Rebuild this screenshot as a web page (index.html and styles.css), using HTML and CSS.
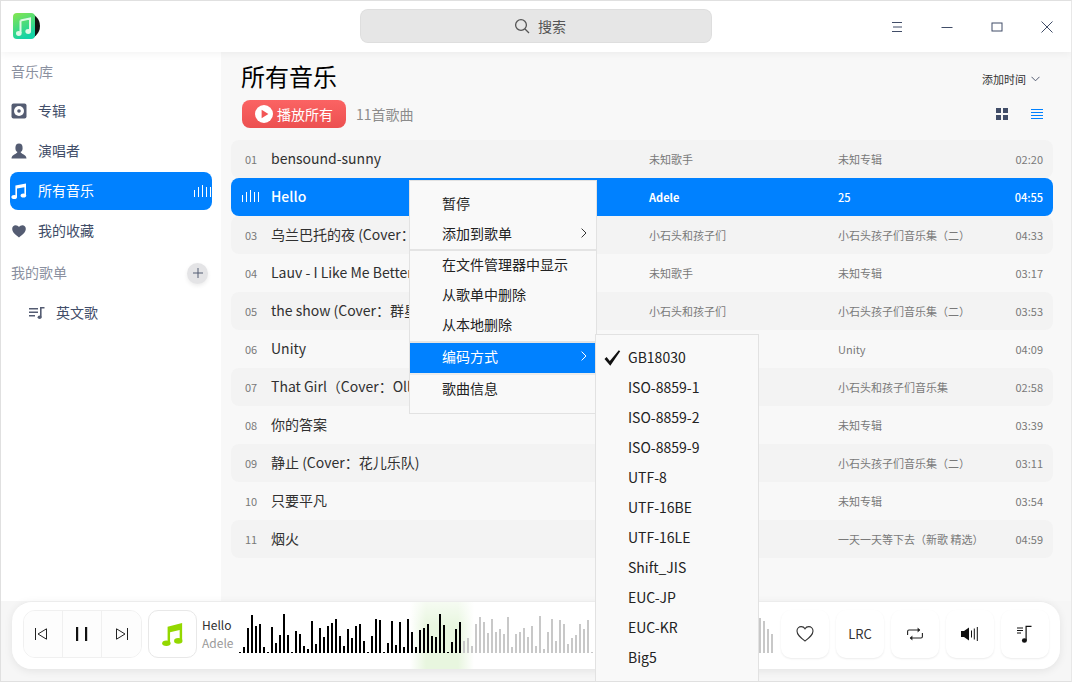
FILE: index.html
```html
<!DOCTYPE html>
<html lang="zh-CN">
<head>
    <meta charset="UTF-8">
    <meta name="viewport" content="width=device-width, initial-scale=1.0">
    <title>音乐</title>
    <link rel="stylesheet" href="styles.css">
</head>
<body>
    <div class="window">
        <header class="topbar">
            <svg class="logo" width="30" height="28" viewBox="0 0 30 28">
                <defs>
                    <linearGradient id="logoFill" x1="0" y1="0" x2="0.4" y2="1">
                        <stop offset="0" stop-color="#86e64e"/>
                        <stop offset="1" stop-color="#14d3a6"/>
                    </linearGradient>
                </defs>
                <circle cx="15" cy="14" r="13" fill="#111"/>
                <rect x="1" y="1" width="22" height="26" rx="4" fill="url(#logoFill)"/>
                <path d="M8.5 8.5 L18 6.5 V19" fill="none" stroke="#dff9e6" stroke-width="2"/>
                <path d="M8.5 8.5 V21" fill="none" stroke="#dff9e6" stroke-width="2"/>
                <ellipse cx="6.8" cy="21.5" rx="2.8" ry="2.4" fill="#dff9e6"/>
                <ellipse cx="16.2" cy="19.5" rx="2.8" ry="2.4" fill="#dff9e6"/>
            </svg>
            <div class="search">
                <svg width="16" height="16" viewBox="0 0 16 16" fill="none" stroke="#555" stroke-width="1.3">
                    <circle cx="7" cy="7" r="5.4"/>
                    <path d="M11 11 L15 15"/>
                </svg>
                <span>搜索</span>
            </div>
            <div class="winctl">
                <svg width="12" height="12" viewBox="0 0 12 12" stroke="#414d68"><path d="M1 1.5 H11 M2 6 H11 M1 10.5 H11"/></svg>
                <svg width="12" height="12" viewBox="0 0 12 12" stroke="#414d68"><path d="M0.5 6.5 H11.5"/></svg>
                <svg width="12" height="12" viewBox="0 0 12 12" fill="none" stroke="#414d68"><rect x="1" y="2" width="10" height="8"/></svg>
                <svg width="12" height="12" viewBox="0 0 12 12" stroke="#414d68"><path d="M0.5 0.5 L11.5 11.5 M11.5 0.5 L0.5 11.5"/></svg>
            </div>
        </header>

        <div class="content">
            <aside class="sidebar">
                <div class="side-label">音乐库</div>
                <nav class="nav">
                    <a class="nav-item">
                        <svg width="16" height="16" viewBox="0 0 16 16"><rect x="0.5" y="0.5" width="15" height="15" rx="2" fill="#545c72"/><circle cx="8" cy="8" r="5" fill="#fff"/><circle cx="8" cy="8" r="1.8" fill="#545c72"/></svg>
                        <span>专辑</span>
                    </a>
                    <a class="nav-item">
                        <svg width="16" height="16" viewBox="0 0 16 16" fill="#545c72"><ellipse cx="8" cy="5" rx="3.6" ry="4.4"/><path d="M6.4 9 L9.6 9 C10 11 15.5 11.5 15.5 15.5 H0.5 C0.5 11.5 6 11 6.4 9 Z"/></svg>
                        <span>演唱者</span>
                    </a>
                    <a class="nav-item active">
                        <svg width="16" height="16" viewBox="0 0 16 16" fill="#fff"><path d="M4.4 2.6 L15 0.6 V12.4 H13.4 V4.2 L6 5.6 V14 H4.4 Z"/><ellipse cx="3.2" cy="14" rx="2.8" ry="2"/><ellipse cx="12.4" cy="12.6" rx="2.8" ry="2"/></svg>
                        <span>所有音乐</span>
                        <i class="eq"><b class="e1"></b><b class="e2"></b><b class="e3"></b><b class="e2"></b><b class="e2"></b></i>
                    </a>
                    <a class="nav-item">
                        <svg width="16" height="16" viewBox="0 0 16 16" fill="#545c72"><path d="M8 14.5 C4 11.5 1.2 9.2 1.2 5.8 C1.2 3.6 2.8 2.2 4.6 2.2 C6 2.2 7.2 2.9 8 4.1 C8.8 2.9 10 2.2 11.4 2.2 C13.2 2.2 14.8 3.6 14.8 5.8 C14.8 9.2 12 11.5 8 14.5 Z"/></svg>
                        <span>我的收藏</span>
                    </a>
                </nav>
                <div class="side-label playlists">
                    <span>我的歌单</span>
                    <button class="add-btn">
                        <svg width="10" height="10" viewBox="0 0 10 10" stroke="#535c72"><path d="M5 0 V10 M0 5 H10"/></svg>
                    </button>
                </div>
                <a class="nav-item sub">
                    <svg width="16" height="14" viewBox="0 0 16 14" fill="#545c72"><path d="M0 2 H9 V3.4 H0 Z M0 5.5 H9 V6.9 H0 Z M0 9 H6 V10.4 H0 Z"/><path d="M11 11 V1 H15.5 V2.6 H12.6 V11 Z"/><ellipse cx="10.6" cy="11.2" rx="2" ry="1.8"/></svg>
                    <span>英文歌</span>
                </a>
            </aside>

            <main class="main">
                <div class="head-row">
                    <h1>所有音乐</h1>
                    <div class="sort">添加时间
                        <svg width="9" height="6" viewBox="0 0 9 6" fill="none" stroke="#545c72"><path d="M0.5 0.8 L4.5 4.8 L8.5 0.8"/></svg>
                    </div>
                </div>
                <div class="tool-row">
                    <button class="play-all">
                        <svg width="18" height="18" viewBox="0 0 18 18"><circle cx="9" cy="9" r="9" fill="#fff"/><path d="M6.6 4.8 L13.4 9 L6.6 13.2 Z" fill="#f25555"/></svg>
                        <span>播放所有</span>
                    </button>
                    <span class="count">11首歌曲</span>
                    <div class="views">
                        <svg width="12" height="12" viewBox="0 0 12 12" fill="#414d68"><rect width="5" height="5"/><rect x="7" width="5" height="5"/><rect y="7" width="5" height="5"/><rect x="7" y="7" width="5" height="5"/></svg>
                        <svg width="12" height="12" viewBox="0 0 12 12" stroke="#0081ff"><path d="M0 1.5 H12 M0 4.5 H12 M0 7.5 H12 M0 10.5 H12"/></svg>
                    </div>
                </div>

                <div class="songs">
                    <div class="song"><span class="no">01</span><span class="name">bensound-sunny</span><span class="artist">未知歌手</span><span class="album">未知专辑</span><span class="time">02:20</span></div>
                    <div class="song playing"><span class="no"><i class="eq"><b class="e1"></b><b class="e2"></b><b class="e3"></b><b class="e2"></b><b class="e2"></b></i></span><span class="name">Hello</span><span class="artist">Adele</span><span class="album">25</span><span class="time">04:55</span></div>
                    <div class="song"><span class="no">03</span><span class="name">乌兰巴托的夜 (Cover：</span><span class="artist">小石头和孩子们</span><span class="album">小石头孩子们音乐集（二）</span><span class="time">04:33</span></div>
                    <div class="song"><span class="no">04</span><span class="name">Lauv - I Like Me Better</span><span class="artist">未知歌手</span><span class="album">未知专辑</span><span class="time">03:17</span></div>
                    <div class="song"><span class="no">05</span><span class="name">the show (Cover：群星)</span><span class="artist">小石头和孩子们</span><span class="album">小石头孩子们音乐集（二）</span><span class="time">03:53</span></div>
                    <div class="song"><span class="no">06</span><span class="name">Unity</span><span class="artist"></span><span class="album">Unity</span><span class="time">04:09</span></div>
                    <div class="song"><span class="no">07</span><span class="name">That Girl（Cover：Olly）</span><span class="artist"></span><span class="album">小石头和孩子们音乐集</span><span class="time">02:58</span></div>
                    <div class="song"><span class="no">08</span><span class="name">你的答案</span><span class="artist"></span><span class="album">未知专辑</span><span class="time">03:39</span></div>
                    <div class="song"><span class="no">09</span><span class="name">静止 (Cover：花儿乐队)</span><span class="artist"></span><span class="album">小石头孩子们音乐集（二）</span><span class="time">03:11</span></div>
                    <div class="song"><span class="no">10</span><span class="name">只要平凡</span><span class="artist"></span><span class="album">未知专辑</span><span class="time">03:54</span></div>
                    <div class="song"><span class="no">11</span><span class="name">烟火</span><span class="artist"></span><span class="album">一天一天等下去（新歌 精选）</span><span class="time">04:59</span></div>
                </div>
            </main>
        </div>

        <footer class="footer">
            <div class="player">
                <div class="transport">
                    <button class="prev">
                        <svg width="14" height="12" viewBox="0 0 14 12" fill="none" stroke="#222"><path d="M1.5 0 V12 M12.5 0.8 L4 6 L12.5 11.2 Z"/></svg>
                    </button>
                    <button>
                        <svg width="14" height="14" viewBox="0 0 14 14" fill="#111"><rect x="1" width="2.2" height="14"/><rect x="10" width="2.2" height="14"/></svg>
                    </button>
                    <button>
                        <svg width="14" height="12" viewBox="0 0 14 12" fill="none" stroke="#222"><path d="M12.5 0 V12 M1.5 0.8 L10 6 L1.5 11.2 Z"/></svg>
                    </button>
                </div>
                <button class="cover">
                    <svg width="21" height="25" viewBox="0 0 24 27" preserveAspectRatio="none" fill="#93d800"><path d="M6.4 5 L23 1 V20 H20.2 V8.6 L9.2 11.2 V23 H6.4 Z"/><ellipse cx="5" cy="23" rx="4.8" ry="3"/><ellipse cx="18.6" cy="20.4" rx="4.8" ry="3"/></svg>
                </button>
                <div class="now">
                    <div class="now-title">Hello</div>
                    <div class="now-artist">Adele</div>
                </div>
                <div class="wave" id="wave"></div>
                <div class="actions">
                    <button>
                        <svg width="18" height="18" viewBox="0 0 18 18" fill="none" stroke="#333" stroke-width="1.1"><path d="M9 16 C4.5 12.6 1 10 1 6 C1 3.4 3 1.6 5.2 1.6 C6.8 1.6 8.2 2.4 9 3.8 C9.8 2.4 11.2 1.6 12.8 1.6 C15 1.6 17 3.4 17 6 C17 10 13.500 12.600 9 16 Z"/></svg>
                    </button>
                    <button class="lrc">LRC</button>
                    <button>
                        <svg width="16" height="14" viewBox="0 0 16 14" fill="none" stroke="#222" stroke-width="1.1"><path d="M0.6 8 V4.4 Q0.6 3 2 3 H13"/><path d="M15.400 6 V9.600 Q15.400 11 14 11 H3"/><path d="M10.600 0.400 L13.200 3 L10.600 5.600" fill="#222" stroke="none"/><path d="M5.400 8.400 L2.800 11 L5.400 13.600" fill="#222" stroke="none"/></svg>
                    </button>
                    <button>
                        <svg width="18" height="14" viewBox="0 0 18 14" fill="#111"><path d="M0 4 H3 L8 0.6 V13.400 L3 10 H0 Z"/><rect x="10" y="3.500" width="1" height="7"/><rect x="12.800" y="1.500" width="1" height="11"/><rect x="15.800" width="1" height="14"/></svg>
                    </button>
                    <button>
                        <svg width="17" height="18" viewBox="0 0 17 18" fill="#111"><path d="M0 2.500 H6 V3.500 H0 Z M0 5 H6 V6 H0 Z M0 7.500 H4 V8.500 H0 Z"/><path d="M8.500 15 V0.700 H14.500 V1.900 H9.700 V15 Z"/><ellipse cx="7.400" cy="15.500" rx="2.500" ry="2.200"/></svg>
                    </button>
                </div>
            </div>
        </footer>

        <div class="menu">
            <div class="menu-item top">暂停</div>
            <div class="menu-item top">添加到歌单<svg class="arrow" width="6" height="10" viewBox="0 0 6 10" fill="none" stroke="#333"><path d="M0.6 0.6 L5 5 L0.6 9.400"/></svg></div>
            <div class="menu-sep first"></div>
            <div class="menu-item">在文件管理器中显示</div>
            <div class="menu-item">从歌单中删除</div>
            <div class="menu-item">从本地删除</div>
            <div class="menu-sep"></div>
            <div class="menu-item current">编码方式<svg class="arrow" width="6" height="10" viewBox="0 0 6 10" fill="none" stroke="#fff"><path d="M0.6 0.6 L5 5 L0.6 9.400"/></svg></div>
            <div class="menu-sep light"></div>
            <div class="menu-item">歌曲信息</div>
        </div>

        <div class="submenu">
            <div class="sub-item checked">
                <svg width="17" height="16" viewBox="0 0 17 16" fill="#111"><path d="M0.500 9 L2.600 7 L5.800 11 L14.800 0.200 L16.200 1.200 L6.300 15.800 Z"/></svg>
                GB18030
            </div>
            <div class="sub-item">ISO-8859-1</div>
            <div class="sub-item">ISO-8859-2</div>
            <div class="sub-item">ISO-8859-9</div>
            <div class="sub-item">UTF-8</div>
            <div class="sub-item">UTF-16BE</div>
            <div class="sub-item">UTF-16LE</div>
            <div class="sub-item">Shift_JIS</div>
            <div class="sub-item">EUC-JP</div>
            <div class="sub-item">EUC-KR</div>
            <div class="sub-item">Big5</div>
        </div>
    </div>
    <script src="wave.js"></script>
</body>
</html>
```

FILE: styles.css
```css
* {
    box-sizing: border-box;
}
html, body {
    margin: 0;
    height: 100%;
    overflow: hidden;
}
body {
    font-family: "Noto Sans CJK SC", "Noto Sans", sans-serif;
    font-size: 14px;
    color: #303030;
}
button {
    font-family: inherit;
    border: none;
    padding: 0;
    cursor: pointer;
}
.window {
    position: relative;
    width: 1072px;
    height: 682px;
    border: 1px solid #e0e0e0;
    border-right-color: #e8e8e8;
    display: flex;
    flex-direction: column;
    overflow: hidden;
    background: #f8f8f8;
}

/* title bar */
.topbar {
    position: relative;
    z-index: 2;
    height: 51px;
    flex: none;
    background: #fff;
    box-shadow: 0 2px 8px rgba(0, 0, 0, 0.05);
    display: flex;
    align-items: center;
    padding: 0 0 1px 11px;
}
.logo {
    flex: none;
}
.search {
    width: 352px;
    height: 34px;
    margin-left: 318px;
    padding-left: 8px;
    background: #e6e6e6;
    border-radius: 8px;
    box-shadow: inset 0 0 0 1px rgba(0, 0, 0, 0.03);
    display: flex;
    align-items: center;
    justify-content: center;
    gap: 8px;
    color: #555;
}
.winctl {
    margin: 2px 0 0 179px;
    display: flex;
    gap: 38px;
}

.content {
    flex: 1;
    display: flex;
    min-height: 0;
}

/* sidebar */
.sidebar {
    width: 220px;
    flex: none;
    background: #fff;
    padding: 0 9px;
}
.side-label {
    height: 40px;
    line-height: 38px;
    padding-left: 1px;
    color: #8a90a0;
}
.side-label.playlists {
    height: 42px;
    line-height: 40px;
    margin-top: 2px;
    display: flex;
    justify-content: space-between;
    align-items: center;
    padding-right: 4px;
}
.playlists span {
    margin-bottom: 2px;
}
.add-btn {
    width: 21px;
    height: 21px;
    border-radius: 50%;
    background: #e4e4e6;
    box-shadow: 0 2px 4px rgba(0, 0, 0, 0.08);
    display: flex;
    align-items: center;
    justify-content: center;
}
.nav {
    display: flex;
    flex-direction: column;
    gap: 2px;
}
.nav-item {
    height: 38px;
    border-radius: 8px;
    display: flex;
    align-items: center;
    gap: 11px;
    padding-left: 1px;
    color: #414d68;
}
.nav-item span {
    margin-bottom: 2px;
}
.nav-item.active {
    background: #0081ff;
    color: #fff;
}
.nav-item.sub {
    padding-left: 19px;
    gap: 11px;
}
.eq {
    display: inline-flex;
    align-items: flex-end;
    gap: 3px;
    height: 12px;
}
.eq b {
    width: 1px;
    background: #fff;
}
.eq .e1 {
    height: 7px;
}
.eq .e2 {
    height: 10px;
}
.eq .e3 {
    height: 12px;
}
.nav-item .eq {
    margin-left: auto;
    margin-right: 1px;
}

/* main list */
.main {
    flex: 1;
    min-width: 0;
    padding: 0 18px 0 10px;
}
.head-row {
    height: 48px;
    display: flex;
    justify-content: space-between;
    align-items: center;
    padding-left: 10px;
}
h1 {
    margin: 0 0 2px;
    font-size: 24px;
    font-weight: 400;
    color: #000;
}
.sort {
    font-size: 11px;
    color: #333;
    display: flex;
    align-items: center;
    gap: 5px;
    margin-top: 6px;
    padding-right: 13px;
}
.tool-row {
    height: 28px;
    display: flex;
    align-items: center;
    padding-left: 11px;
}
.play-all {
    width: 104px;
    height: 28px;
    border-radius: 8px;
    background: linear-gradient(#fb6363, #ec5050);
    color: #fff;
    font-size: 14px;
    display: flex;
    align-items: center;
    gap: 4px;
    padding-left: 13px;
}
.count {
    margin-left: 10px;
    color: #8c8c8c;
}
.views {
    margin-left: auto;
    display: flex;
    gap: 23px;
    padding-right: 10px;
}
.songs {
    margin-top: 12px;
}
.song {
    height: 38px;
    border-radius: 8px;
    display: flex;
    align-items: center;
    padding: 0 10px 0 14px;
}
.song:nth-child(odd) {
    background: #f3f3f3;
}
.song .no {
    width: 26px;
    flex: none;
    font-size: 11px;
    color: #797979;
}
.song .name {
    width: 378px;
    flex: none;
    padding-bottom: 2px;
    white-space: nowrap;
}
.song .artist {
    width: 189px;
    flex: none;
    font-size: 11px;
    color: #797979;
}
.song .album {
    flex: 1;
    font-size: 11px;
    color: #797979;
}
.song .time {
    font-size: 11px;
    color: #797979;
}
.song.playing {
    background: #0081ff;
}
.song.playing span {
    color: #fff;
}
.song.playing .name {
    font-weight: 500;
}
.song.playing .artist {
    font-weight: 700;
}
.song.playing .album, .song.playing .time {
    font-weight: 500;
}
.song.playing .no {
    margin-left: -3px;
    margin-right: 3px;
}

/* player */
.footer {
    flex: none;
    height: 80px;
    padding: 0 11px 12px;
    background: #f6f6f6;
}
.player {
    height: 68px;
    border-radius: 20px;
    background:
        linear-gradient(180deg, rgba(255, 255, 255, 0.6), rgba(255, 255, 255, 0) 35%),
        linear-gradient(90deg, #fff 398px, #e8f6df 414px, #e8f6df 446px, #fff 462px);
    box-shadow: 0 2px 8px rgba(0, 0, 0, 0.08);
    border-top: 1px solid #ececec;
    display: flex;
    align-items: center;
    padding: 0 11px 3px;
}
.player button {
    background: #fff;
    display: flex;
    align-items: center;
    justify-content: center;
}
.transport {
    display: flex;
    height: 48px;
    border: 1px solid #f0f0f0;
    border-radius: 12px;
    overflow: hidden;
    flex: none;
}
.transport button {
    width: 39px;
    border-right: 1px solid #f0f0f0;
    background: #fdfdfd;
}
.transport button:last-child {
    border-right: none;
}
.transport .prev {
    padding-right: 4px;
}
.player .cover {
    width: 49px;
    height: 48px;
    flex: none;
    margin-left: 6px;
    border: 1px solid #e8e8e8;
    border-radius: 10px;
}
.now {
    width: 37px;
    flex: none;
    margin-left: 5px;
    font-size: 12px;
    line-height: 18px;
    white-space: nowrap;
}
.now-title {
    color: #303030;
}
.now-artist {
    color: #9a9a9a;
}
.wave {
    flex: 1;
    min-width: 0;
    height: 48px;
    padding-bottom: 5px;
    display: flex;
    align-items: flex-end;
    gap: 2px;
    overflow: hidden;
}
.wave span {
    width: 2px;
    flex: none;
    background: #c8c8c8;
}
.wave span.played {
    background: #000;
}
.actions {
    display: flex;
    gap: 7px;
    flex: none;
    margin-left: 6px;
}
.actions button {
    width: 48px;
    height: 48px;
    border-radius: 10px;
    box-shadow: 0 1px 2px rgba(0, 0, 0, 0.08);
}
.actions .lrc {
    font-size: 13px;
    padding-bottom: 2px;
    color: #333;
}

/* context menus */
.menu, .submenu {
    position: absolute;
    background: #f9f9f9;
    border: 1px solid #e2e2e2;
}
.menu {
    left: 408px;
    top: 179px;
    width: 188px;
    padding: 7px 0 8px;
    z-index: 3;
}
.menu-item {
    height: 30px;
    line-height: 26px;
    padding: 0 9px 4px 32px;
    color: #222;
    display: flex;
    align-items: center;
    justify-content: space-between;
}
.menu-item.top {
    padding-bottom: 1px;
}
.menu-item.current {
    background: #0081ff;
    color: #fff;
}
.menu-sep {
    height: 2px;
    background: #e4e4e4;
}
.menu-sep.first {
    margin-top: 1px;
}
.menu-sep.light {
    background: #ececec;
}
.submenu {
    left: 594px;
    top: 333px;
    bottom: -2px;
    width: 164px;
    padding-top: 7px;
    z-index: 4;
}
.sub-item {
    height: 30px;
    line-height: 30px;
    padding-left: 32px;
    color: #222;
}
.sub-item.checked {
    position: relative;
}
.sub-item.checked svg {
    position: absolute;
    left: 8px;
    top: 8px;
}
```

FILE: wave.js
```js
// bar heights of the track, in px. the first 56 are already played
const heights = [
    1, 6, 25, 38, 27, 29, 6, 1, 26, 10, 18, 39, 18, 1, 22, 19, 7, 4, 32, 9,
    25, 16, 27, 30, 34, 17, 7, 24, 15, 27, 29, 12, 1, 17, 34, 33, 1, 10, 32, 8,
    31, 6, 34, 21, 6, 23, 25, 29, 17, 16, 39, 28, 1, 11, 24, 31, 12, 15, 7, 29,
    36, 31, 20, 34, 21, 24, 19, 36, 6, 19, 21, 25, 16, 27, 7, 37, 4, 21, 34, 12,
    33, 29, 9, 15, 18, 29, 24, 33, 1,
    20, 20, 20, 20, 20, 20, 20, 20, 20, 20, 20, 20, 20, 20, 20, 20, 20, 20, 20, 20,
    20, 20, 20, 20, 20, 20, 20, 20, 20, 20, 20, 20, 20, 20, 20, 20, 20, 20, 20, 20, 20,
    35, 32, 24, 19
];
const playedCount = 56;

const wave = document.getElementById("wave");
heights.forEach((h, i) => {
    const bar = document.createElement("span");
    bar.style.height = h + "px";
    if (i < playedCount) bar.className = "played";
    wave.appendChild(bar);
});
```
